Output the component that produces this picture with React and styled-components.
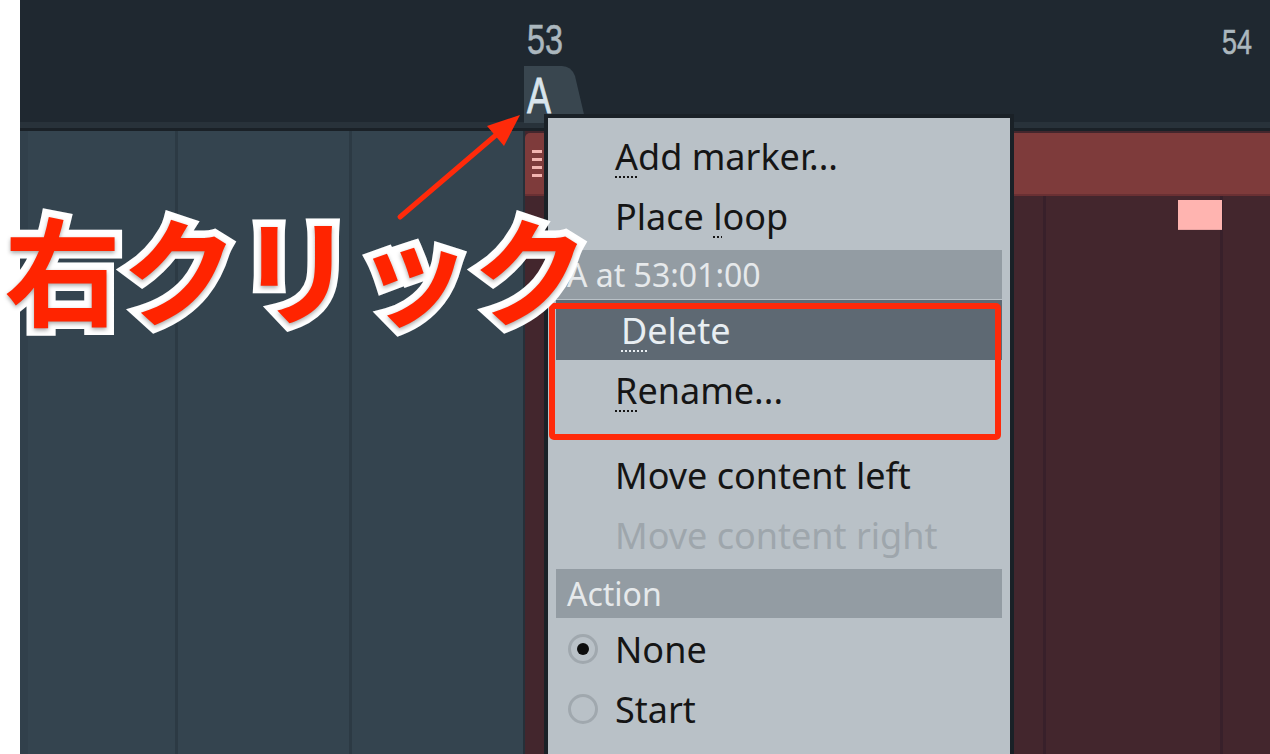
import styled, { createGlobalStyle } from "styled-components";

const Global = createGlobalStyle`
  html, body {
    margin: 0;
    padding: 0;
    background: #ffffff;
  }
  * {
    box-sizing: border-box;
  }
`;

const laneCells = [158, 174, 173];
const clipCells = [174, 173, 174, 177, 173, 48];

export default function App() {
  return (
    <>
      <Global />
      <Page>
        <Gutter />
        <Main>
          <Ruler>
            <BarMark $left={507}>
              <BarNum>53</BarNum>
              <Tab>
                <svg width="62" height="57" viewBox="0 0 62 57">
                  <path d="M0 0 H38 Q47 0 51 10 L62 57 H0 Z" fill="#39464f" />
                </svg>
                <TabLetter>A</TabLetter>
              </Tab>
            </BarMark>
            <BarMark $left={1202}>
              <BarNum $small>54</BarNum>
            </BarMark>
          </Ruler>
          <Tracks>
            <Lane>
              {laneCells.map((w, i) => (
                <Cell key={i} $w={w} />
              ))}
            </Lane>
            <Clip>
              <ClipHead>
                <Grip>
                  <i />
                  <i />
                  <i />
                  <i />
                </Grip>
              </ClipHead>
              <ClipBody>
                {clipCells.map((w, i) => (
                  <ClipCell key={i} $w={w} />
                ))}
                <Note />
              </ClipBody>
            </Clip>
          </Tracks>
        </Main>

        <Menu>
          <Item>
            <Label>
              <Mn>A</Mn>dd marker...
            </Label>
          </Item>
          <Item>
            <Label>
              Place <Mn>l</Mn>oop
            </Label>
          </Item>
          <Section>A at 53:01:00</Section>
          <Item $active>
            <Label>
              <Mn>D</Mn>elete
            </Label>
          </Item>
          <Item>
            <Label>
              <Mn>R</Mn>ename...
            </Label>
          </Item>
          <Spacer />
          <Item>
            <Label>Move content left</Label>
          </Item>
          <Item $disabled>
            <Label>Move content right</Label>
          </Item>
          <Section>Action</Section>
          <Item $radio>
            <Radio $checked />
            <Label>None</Label>
          </Item>
          <Item $radio>
            <Radio />
            <Label>Start</Label>
          </Item>
          <Highlight />
        </Menu>

        <Callout>右クリック</Callout>
        <Arrow width="140" height="120" viewBox="0 0 140 120">
          <line x1="10" y1="112" x2="106" y2="30" stroke="#ff2a0a" strokeWidth="5" strokeLinecap="round" />
          <polygon points="130,10 114,41 97,21" fill="#ff2a0a" />
        </Arrow>
      </Page>
    </>
  );
}

const Page = styled.div`
  position: relative;
  display: flex;
  width: 1270px;
  height: 754px;
  overflow: hidden;
`;

const Gutter = styled.div`
  width: 20px;
  flex: none;
  background: #ffffff;
`;

const Main = styled.div`
  flex: 1;
  display: flex;
  flex-direction: column;
  min-width: 0;
`;

const Ruler = styled.div`
  position: relative;
  height: 131px;
  flex: none;
  background: #1f2830;
  border-bottom: 3px solid #1a2127;
  box-shadow: inset 0 -6px 0 #28323a;
`;

const BarMark = styled.div`
  position: absolute;
  left: ${({ $left }) => $left}px;
  top: 0;
  display: flex;
  flex-direction: column;
`;

const BarNum = styled.div`
  font-family: "Liberation Sans", Arial, sans-serif;
  font-size: ${({ $small }) => ($small ? 35 : 42)}px;
  line-height: 1;
  color: #abb7be;
  -webkit-text-stroke: 0.6px #abb7be;
  height: 66px;
  padding-top: ${({ $small }) => ($small ? 24 : 19)}px;
  transform: scaleX(0.77);
  transform-origin: left top;
`;

const Tab = styled.div`
  position: relative;
  width: 62px;
  height: 57px;
  margin-left: -3px;

  svg {
    position: absolute;
    inset: 0;
  }
`;

const TabLetter = styled.div`
  position: relative;
  font-family: "Liberation Sans", Arial, sans-serif;
  font-size: 50px;
  line-height: 1;
  color: #d8e4ec;
  -webkit-text-stroke: 0.8px #d8e4ec;
  padding: 5px 0 0 4px;
  transform: scaleX(0.72);
  transform-origin: left top;
`;

const Tracks = styled.div`
  flex: 1;
  display: flex;
  min-height: 0;
`;

const Lane = styled.div`
  width: 505px;
  flex: none;
  display: flex;
  background: #34444f;
  box-shadow: inset 8px 0 0 #31404b;
`;

const Cell = styled.div`
  width: ${({ $w }) => $w}px;
  flex: none;
  border-right: 3px solid #2c3a44;

  &:last-child {
    border-right: 2px solid #263039;
  }
`;

const Clip = styled.div`
  flex: 1;
  display: flex;
  flex-direction: column;
  background: #43262d;
  padding-top: 2px;
`;

const ClipHead = styled.div`
  height: 63px;
  flex: none;
  background: #7e3b3b;
  border-top-left-radius: 5px;
  border-bottom: 2px solid #6a3033;
  display: flex;
  align-items: center;
  padding-left: 7px;
`;

const Grip = styled.div`
  display: flex;
  flex-direction: column;
  gap: 5px;

  i {
    display: block;
    width: 10px;
    height: 3px;
    background: #f2b4b0;
  }
`;

const ClipBody = styled.div`
  position: relative;
  flex: 1;
  display: flex;
`;

const ClipCell = styled.div`
  width: ${({ $w }) => $w}px;
  flex: none;
  border-right: 3px solid #38202a;
`;

const Note = styled.div`
  position: absolute;
  left: 653px;
  top: 4px;
  width: 44px;
  height: 30px;
  background: #ffb4b0;
  border-bottom: 1px solid #e8a4a2;
`;

const Menu = styled.div`
  position: absolute;
  left: 544px;
  top: 114px;
  width: 470px;
  height: 660px;
  background: #b9c1c7;
  border: 4px solid #1a2127;
  padding: 8px 8px 0;
  display: flex;
  flex-direction: column;
  font-family: "Noto Sans", "Open Sans", sans-serif;
`;

const Item = styled.div`
  height: 60px;
  flex: none;
  display: flex;
  align-items: center;
  gap: 17px;
  padding-left: ${({ $active, $radio }) => ($radio ? 12 : $active ? 65 : 59)}px;
  font-size: 36px;
  color: ${({ $active, $disabled }) =>
    $active ? "#e8eef2" : $disabled ? "#9ea6ac" : "#151515"};
  background: ${({ $active }) => ($active ? "#5e6973" : "transparent")};
  white-space: nowrap;
`;

const Label = styled.span`
  display: block;
`;

const Mn = styled.span`
  text-decoration: underline dotted 2px;
  text-underline-offset: 7px;
`;

const Section = styled.div`
  height: 49px;
  flex: none;
  margin: 4px 0 1px;
  display: flex;
  align-items: center;
  padding-left: 11px;
  background: #939ca3;
  color: #e6e9eb;
  font-size: 32px;
`;

const Spacer = styled.div`
  height: 25px;
  flex: none;
`;

const Radio = styled.span`
  width: 30px;
  height: 30px;
  flex: none;
  border-radius: 50%;
  border: 3px solid #a0a8ae;
  display: flex;
  align-items: center;
  justify-content: center;

  &::after {
    content: "";
    width: 12px;
    height: 12px;
    border-radius: 50%;
    background: ${({ $checked }) => ($checked ? "#0d0d0d" : "transparent")};
  }
`;

const Highlight = styled.div`
  position: absolute;
  left: 1px;
  top: 185px;
  width: 452px;
  height: 137px;
  border: 6px solid #ff2a0a;
  border-radius: 5px;
`;

const Callout = styled.div`
  position: absolute;
  left: 4px;
  top: 208px;
  font-family: "Noto Sans CJK JP", sans-serif;
  font-weight: 700;
  font-size: 117px;
  line-height: 1;
  letter-spacing: 0;
  color: #ff2400;
  -webkit-text-stroke: 15px #ffffff;
  paint-order: stroke fill;
  text-shadow: 0 2px 4px rgba(0, 0, 0, 0.35);
  white-space: nowrap;
`;

const Arrow = styled.svg`
  position: absolute;
  left: 390px;
  top: 105px;
`;
